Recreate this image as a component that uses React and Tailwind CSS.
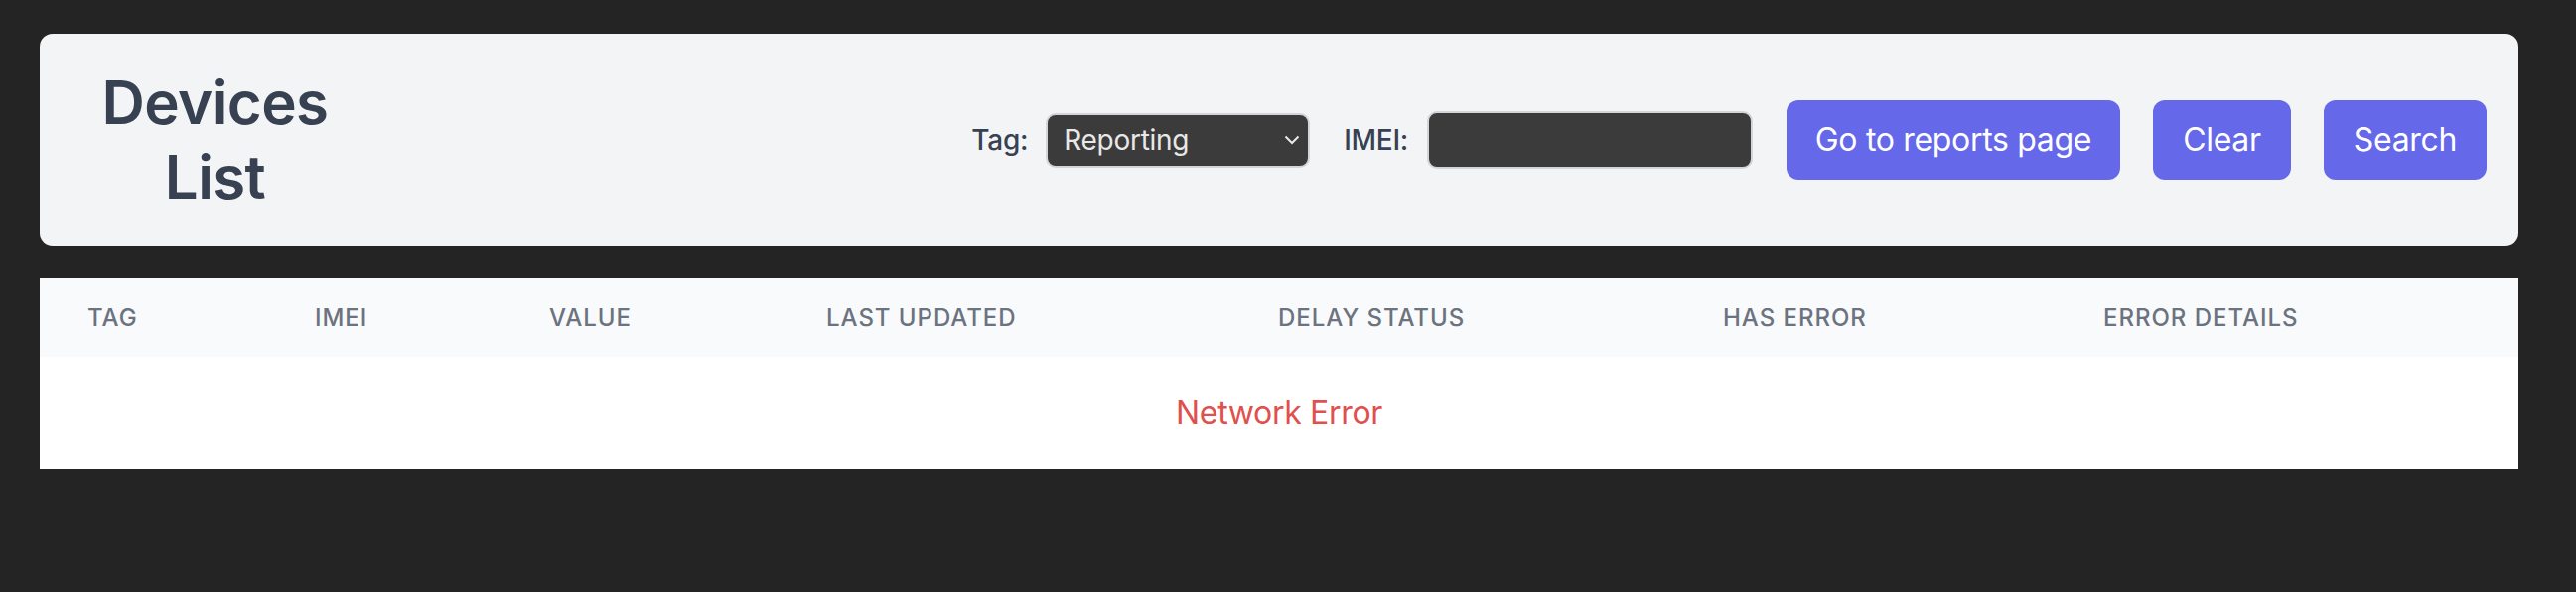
import { useState } from "react";

const columns = [
  { label: "Tag", w: "w-[229px]" },
  { label: "IMEI", w: "w-[236px]" },
  { label: "Value", w: "w-[279px]" },
  { label: "Last Updated", w: "w-[455px]" },
  { label: "Delay Status", w: "w-[448px]" },
  { label: "Has Error", w: "w-[383px]" },
  { label: "Error Details", w: "w-[466px]" },
];

const App = () => {
  const [tag, setTag] = useState("Reporting");
  const [imei, setImei] = useState("");

  return (
    <div
      className="min-h-[596px] bg-[#242424] pt-[34px] pl-[40px]"
      style={{ fontFamily: "Inter, 'Noto Sans', sans-serif", colorScheme: "dark" }}
    >
      {/* header card */}
      <div className="flex w-[2496px] items-center justify-between rounded-[13px] bg-[#f3f4f6] px-[32px] py-[32px]">
        <h1 className="w-[289px] text-center text-[60px] font-semibold leading-[75px] tracking-[-0.01em] text-[#374151]">
          Devices List
        </h1>

        <div className="flex items-center">
          <label className="mr-[18px] text-[28px] font-medium tracking-[-0.01em] text-[#374151]">Tag:</label>
          <div className="relative mr-[34px]">
            <select
              value={tag}
              onChange={(e) => setTag(e.target.value)}
              className="h-[55px] w-[266px] appearance-none rounded-[10px] border-2 border-[#d4d5d9] bg-[#3b3b3b] pl-[16px] text-[28px] tracking-[-0.01em] text-[#e8e8e8] outline-none"
            >
              <option>Reporting</option>
              <option>Idle</option>
              <option>Offline</option>
            </select>
            <svg
              className="pointer-events-none absolute right-[10px] top-1/2 -translate-y-1/2"
              width="16"
              height="10"
              viewBox="0 0 16 10"
              fill="none"
            >
              <path d="M1.5 1.5 8 8l6.5-6.5" stroke="#e8e8e8" strokeWidth="2" />
            </svg>
          </div>

          <label className="mr-[19px] text-[28px] font-medium tracking-[-0.01em] text-[#374151]">IMEI:</label>
          <input
            value={imei}
            onChange={(e) => setImei(e.target.value)}
            className="mr-[34px] h-[58px] w-[328px] rounded-[10px] border-2 border-[#d4d5d9] bg-[#3b3b3b] px-[16px] text-[28px] text-[#e8e8e8] outline-none"
          />

          <div className="flex items-center gap-[33px]">
            <button className="h-[80px] w-[336px] rounded-[12px] bg-[#6568e9] text-[32px] tracking-[-0.01em] text-white">
              Go to reports page
            </button>
            <button className="h-[80px] w-[139px] rounded-[12px] bg-[#6568e9] text-[32px] tracking-[-0.01em] text-white">
              Clear
            </button>
            <button className="h-[80px] w-[164px] rounded-[12px] bg-[#6568e9] text-[32px] tracking-[-0.01em] text-white">
              Search
            </button>
          </div>
        </div>
      </div>

      {/* table */}
      <table className="mt-[32px] w-[2496px] table-fixed border-collapse bg-white">
        <thead className="bg-[#f9fafb]">
          <tr>
            {columns.map((c) => (
              <th
                key={c.label}
                className={`${c.w} h-[79px] px-[48px] text-left text-[24px] font-medium uppercase tracking-[0.04em] text-[#6b7280]`}
              >
                {c.label}
              </th>
            ))}
          </tr>
        </thead>
        <tbody>
          <tr>
            <td colSpan={7} className="h-[113px] text-center text-[32px] tracking-[-0.01em] text-[#e0504e]">
              Network Error
            </td>
          </tr>
        </tbody>
      </table>
    </div>
  );
};

export default App;
